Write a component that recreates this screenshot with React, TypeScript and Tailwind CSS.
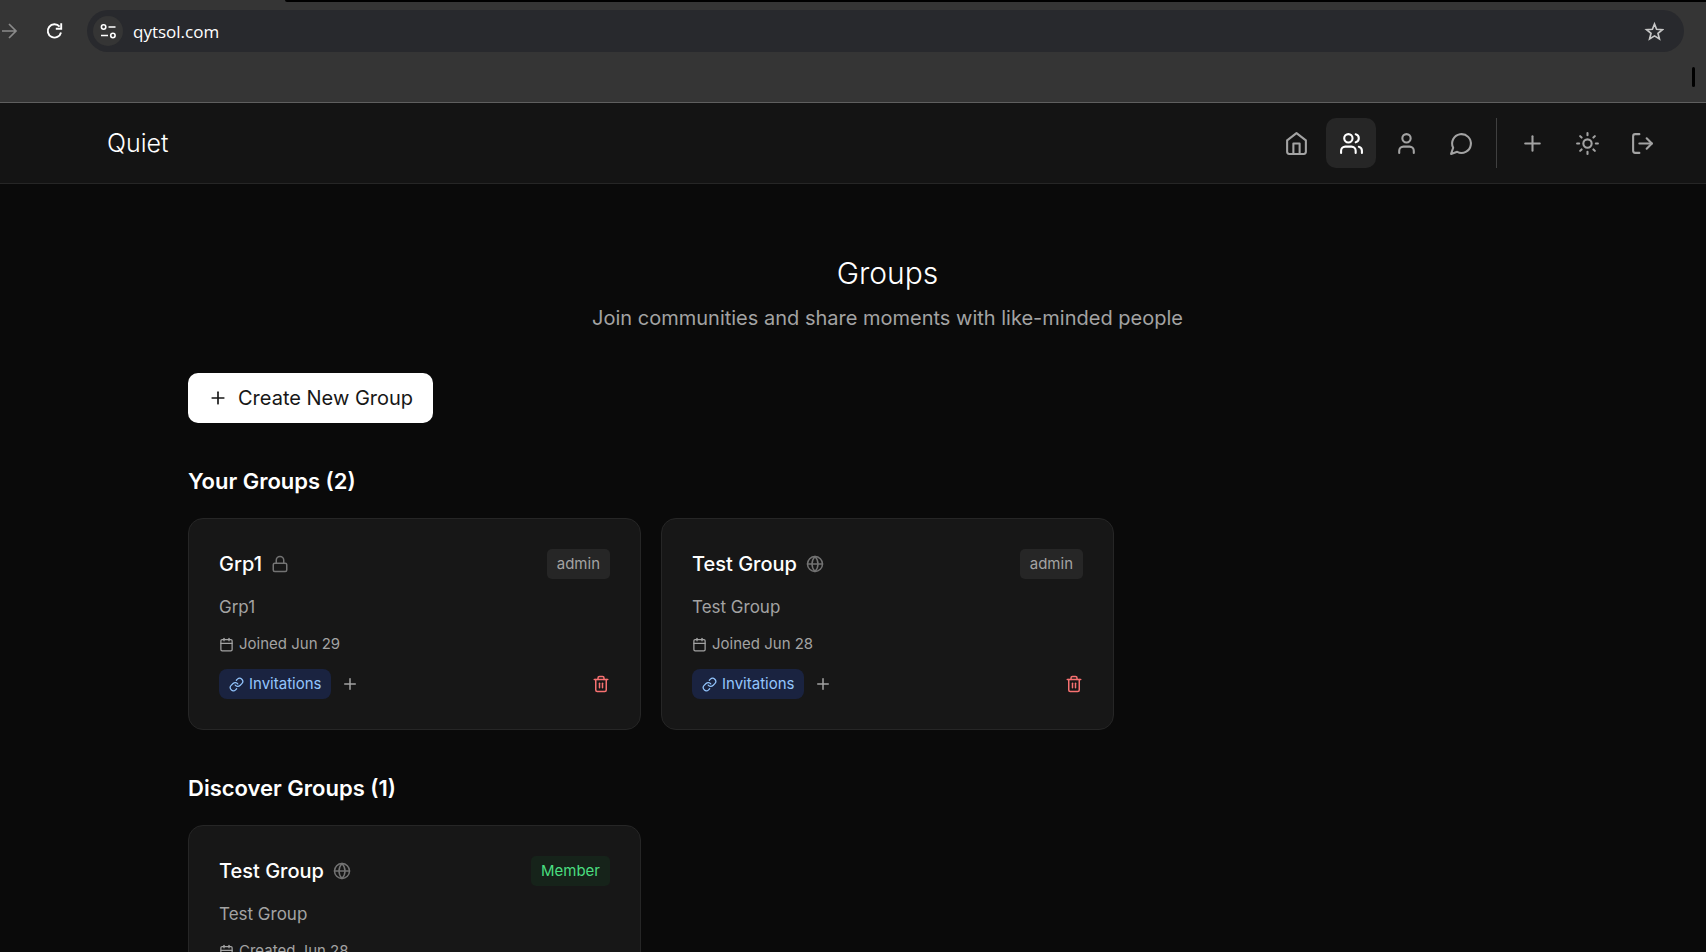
import { Calendar, Globe, Link, Lock, LogOut, Plus, Sun, Trash2, User } from 'lucide-react';
import type { ComponentType, ReactNode } from 'react';

type IconProps = { className?: string; strokeWidth?: number | string };

function OutlineIcon({ className, children }: { className?: string; children: ReactNode }) {
  return (
    <svg
      viewBox="0 0 24 24"
      className={className}
      fill="none"
      stroke="currentColor"
      strokeWidth="2"
      strokeLinecap="round"
      strokeLinejoin="round"
    >
      {children}
    </svg>
  );
}

function HomeIcon({ className }: IconProps) {
  return (
    <OutlineIcon className={className}>
      <path d="m3 9 9-7 9 7v11a2 2 0 0 1-2 2H5a2 2 0 0 1-2-2z" />
      <path d="M9 22V12h6v10" />
    </OutlineIcon>
  );
}

function GroupsIcon({ className }: IconProps) {
  return (
    <OutlineIcon className={className}>
      <path d="M16 21v-2a4 4 0 0 0-4-4H6a4 4 0 0 0-4 4v2" />
      <circle cx="9" cy="7" r="4" />
      <path d="M22 21v-2a4 4 0 0 0-3-3.870" />
      <path d="M16 3.130a4 4 0 0 1 0 7.750" />
    </OutlineIcon>
  );
}

function ChatIcon({ className }: IconProps) {
  return (
    <OutlineIcon className={className}>
      <path d="M7.9 20A9 9 0 1 0 4 16.1L2 22Z" />
    </OutlineIcon>
  );
}

function NavButton({ icon: Icon, label, active = false }: { icon: ComponentType<IconProps>; label: string; active?: boolean }) {
  return (
    <button
      type="button"
      aria-label={label}
      className={
        active
          ? 'flex size-[50px] items-center justify-center rounded-[10px] bg-[#262626] text-white'
          : 'flex size-[50px] items-center justify-center rounded-[10px] text-[#a3a3a3]'
      }
    >
      <Icon className="size-[25px]" />
    </button>
  );
}

function BrowserBar() {
  return (
    <div className="h-[103px] border-b border-[#5f5f5f] bg-[#353535] text-white">
      <div className="flex justify-end">
        <div className="ml-[285px] h-[2px] flex-1 rounded-bl-full bg-black" />
      </div>
      <div className="flex items-center pt-2 pr-[22px]">
        <button type="button" aria-label="Forward" className="text-[#8a8a8a]">
          <svg viewBox="0 0 18 18" className="size-[18px]" fill="none" stroke="currentColor" strokeWidth="1.7">
            <path d="M2 9h14M9 2l7 7-7 7" />
          </svg>
        </button>
        <button type="button" aria-label="Reload" className="ml-[26px]">
          <svg viewBox="0 0 20 20" className="size-5" fill="none" stroke="currentColor" strokeWidth="1.9">
            <path d="M17 11.500A6.700 6.700 0 1 1 15.600 5.600" />
            <path d="M17.200 2.300v5.400h-5.400" />
          </svg>
        </button>
        <div className="ml-[23px] flex h-[42px] flex-1 items-center rounded-full bg-[#28292d] pr-5 pl-[6px]">
          <button type="button" aria-label="Site information" className="flex size-[30px] items-center justify-center rounded-full bg-[#353535]">
            <svg viewBox="0 0 16 16" className="size-4" fill="none" stroke="currentColor" strokeWidth="1.6">
              <circle cx="3.6" cy="4" r="2.200" />
              <path d="M8.500 4h7M1 12.500h7" />
              <circle cx="12.900" cy="12.500" r="2.200" />
            </svg>
          </button>
          <input
            aria-label="Address"
            defaultValue="qytsol.com"
            className="ml-[10px] min-w-0 flex-1 bg-transparent pt-[2px] font-['Open_Sans',sans-serif] text-[17px] outline-none"
          />
          <button type="button" aria-label="Bookmark this page" className="text-[#c7c7c7]">
            <svg viewBox="0 0 20 20" className="size-5" fill="none" stroke="currentColor" strokeWidth="1.7">
              <path d="M10.500 3l2.100 5.300 5.800.4-4.400 3.700 1.400 5.600-4.900-3.100-4.900 3.100 1.400-5.600-4.400-3.700 5.800-.4z" />
            </svg>
          </button>
        </div>
      </div>
      <div className="mt-[15px] mr-[11px] flex justify-end">
        <div className="h-5 w-[3px] rounded-full bg-black" />
      </div>
    </div>
  );
}

function Header() {
  return (
    <header className="flex items-center justify-between border-b border-[#262626] bg-[#141414] py-[15px] pr-[39px] pl-[107px]">
      <a href="#home" className="text-[25px] leading-[35px] font-light text-white">
        Quiet
      </a>
      <nav className="flex items-center gap-[5px]">
        <NavButton icon={HomeIcon} label="Home" />
        <NavButton icon={GroupsIcon} label="Groups" active />
        <NavButton icon={User} label="Profile" />
        <NavButton icon={ChatIcon} label="Messages" />
        <div className="mx-[5px] h-[50px] w-px bg-[#404040]" />
        <NavButton icon={Plus} label="New post" />
        <NavButton icon={Sun} label="Toggle theme" />
        <NavButton icon={LogOut} label="Log out" />
      </nav>
    </header>
  );
}

type Group = { name: string; isPrivate?: boolean; date: string; member?: boolean };

function GroupCard({ name, isPrivate = false, date, member = false }: Group) {
  const Privacy = isPrivate ? Lock : Globe;
  return (
    <article className="rounded-[15px] border border-[#262626] bg-[#171717] p-[30px]">
      <div className="flex items-center justify-between">
        <div className="flex items-center gap-[9px]">
          <h3 className="text-[20px] leading-[30px] font-medium text-white">{name}</h3>
          <Privacy className="size-[18px] text-[#737373]" />
        </div>
        {member ? (
          <span className="rounded-[5px] bg-[#16231a] px-[10px] py-[5px] text-[15px] leading-5 text-[#4ade80]">Member</span>
        ) : (
          <span className="rounded-[5px] bg-[#262626] px-[10px] py-[5px] text-[15px] leading-5 text-[#a3a3a3]">admin</span>
        )}
      </div>
      <p className="mt-4 text-[17px] leading-[25px] text-[#a3a3a3]">{name}</p>
      <p className="mt-[14px] flex items-center gap-[5px] text-[15px] leading-5 text-[#a3a3a3]">
        <Calendar className="size-[15px]" />
        {date}
      </p>
      <div className="mt-[15px] flex items-center">
        <button type="button" className="flex items-center gap-[5px] rounded-[8px] bg-[#1a2340] px-[10px] py-[5px] text-[15px] leading-5 text-[#93c5fd]">
          <Link className="size-[15px]" />
          Invitations
        </button>
        <button type="button" aria-label="Create invitation" className="ml-[10px] text-[#a3a3a3]">
          <Plus className="size-[18px]" />
        </button>
        <button type="button" aria-label="Delete group" className="ml-auto text-[#f87171]">
          <Trash2 className="size-[18px]" />
        </button>
      </div>
    </article>
  );
}

function Section({ title, children }: { title: string; children: ReactNode }) {
  return (
    <section className="mt-[41px]">
      <h2 className="text-[22px] leading-[35px] font-semibold text-white">{title}</h2>
      <div className="mt-[19px] grid grid-cols-3 gap-5">{children}</div>
    </section>
  );
}

export default function App() {
  return (
    <div className="h-screen overflow-hidden bg-[#0a0a0a] font-[Inter,sans-serif]">
      <BrowserBar />
      <Header />
      <main className="pt-[68px] pr-[119px] pb-10 pl-[188px]">
        <div className="text-center">
          <h1 className="text-[30px] leading-[43px] font-light text-white">Groups</h1>
          <p className="mt-2 text-[20px] leading-[30px] text-[#a3a3a3]">
            Join communities and share moments with like-minded people
          </p>
        </div>
        <button type="button" className="mt-10 flex h-[50px] items-center gap-[10px] rounded-[10px] bg-white px-5 text-[20px] text-[#171717]">
          <Plus className="size-5" />
          Create New Group
        </button>
        <Section title="Your Groups (2)">
          <GroupCard name="Grp1" isPrivate date="Joined Jun 29" />
          <GroupCard name="Test Group" date="Joined Jun 28" />
        </Section>
        <Section title="Discover Groups (1)">
          <GroupCard name="Test Group" date="Created Jun 28" member />
        </Section>
      </main>
    </div>
  );
}
